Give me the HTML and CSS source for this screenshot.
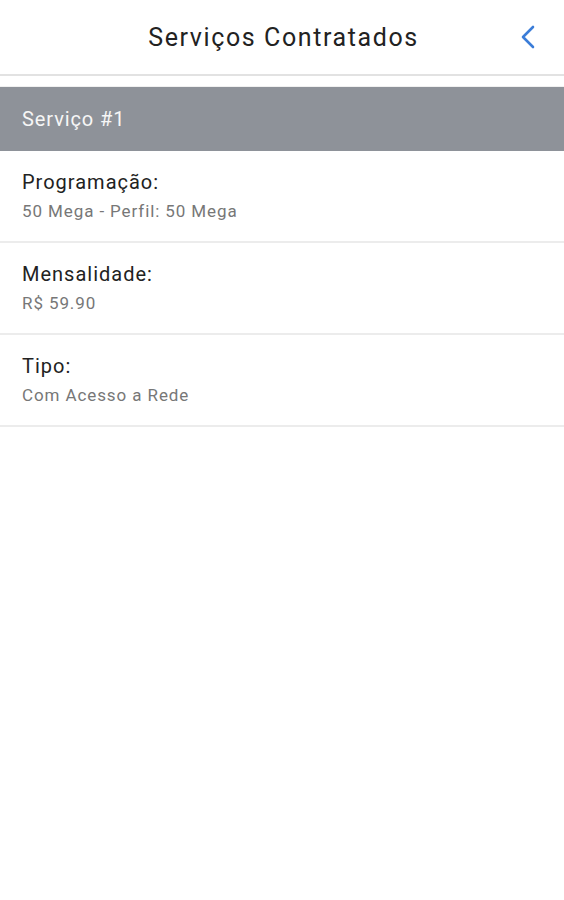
FILE: index.html
```html
<!DOCTYPE html>
<html lang="pt-BR">
<head>
<meta charset="UTF-8">
<meta name="viewport" content="width=device-width, initial-scale=1.0">
<title>Serviços Contratados</title>
<link rel="stylesheet" href="styles.css">
</head>
<body>
<div class="header">
    <h1 class="header-title">Serviços Contratados</h1>
    <a class="back" href="#">
        <svg width="16" height="24" viewBox="0 0 16 24"><path d="M13 2 L3 12 L13 22" fill="none" stroke="#3b7dd8" stroke-width="2.6" stroke-linecap="round" stroke-linejoin="round"/></svg>
    </a>
</div>
<div class="content">
    <!-- Service block -->
    <div class="section-title">Serviço #1</div>
    <div class="item">
        <div class="item-label">Programação:</div>
        <div class="item-value">50 Mega - Perfil: 50 Mega</div>
    </div>
    <div class="item">
        <div class="item-label">Mensalidade:</div>
        <div class="item-value">R$ 59.90</div>
    </div>
    <div class="item">
        <div class="item-label">Tipo:</div>
        <div class="item-value">Com Acesso a Rede</div>
    </div>
</div>
</body>
</html>
```
FILE: styles.css
```css
body {
    margin: 0;
    font-family: Roboto, "Liberation Sans", sans-serif;
    background-color: #fff;
}
.header {
    position: relative;
    height: 74px;
    display: flex;
    justify-content: center;
    align-items: center;
    border-bottom: 2px solid #e2e2e2;
    background: #fff;
}
.header-title {
    margin: 0 0 0 3px;
    font-size: 25px;
    font-weight: 400;
    letter-spacing: 1.6px;
    color: #222;
}
.back {
    position: absolute;
    right: 28px;
    top: 25px;
    display: flex;
}
.content {
    margin-top: 10px;
    border-top: 1px solid #f0f0f0;
}
.section-title {
    height: 64px;
    padding: 0 22px;
    display: flex;
    align-items: center;
    background-color: #8e9299;
    color: #f6f6f6;
    font-size: 20px;
    letter-spacing: 0.9px;
}
.item {
    height: 92px;
    padding: 0 22px 2px;
    box-sizing: border-box;
    display: flex;
    flex-direction: column;
    justify-content: center;
    border-bottom: 2px solid #ececec;
}
.item-label {
    font-size: 20px;
    letter-spacing: 1px;
    color: #222;
    margin-bottom: 7px;
}
.item-value {
    font-size: 17px;
    letter-spacing: 0.9px;
    color: #777;
}
```
